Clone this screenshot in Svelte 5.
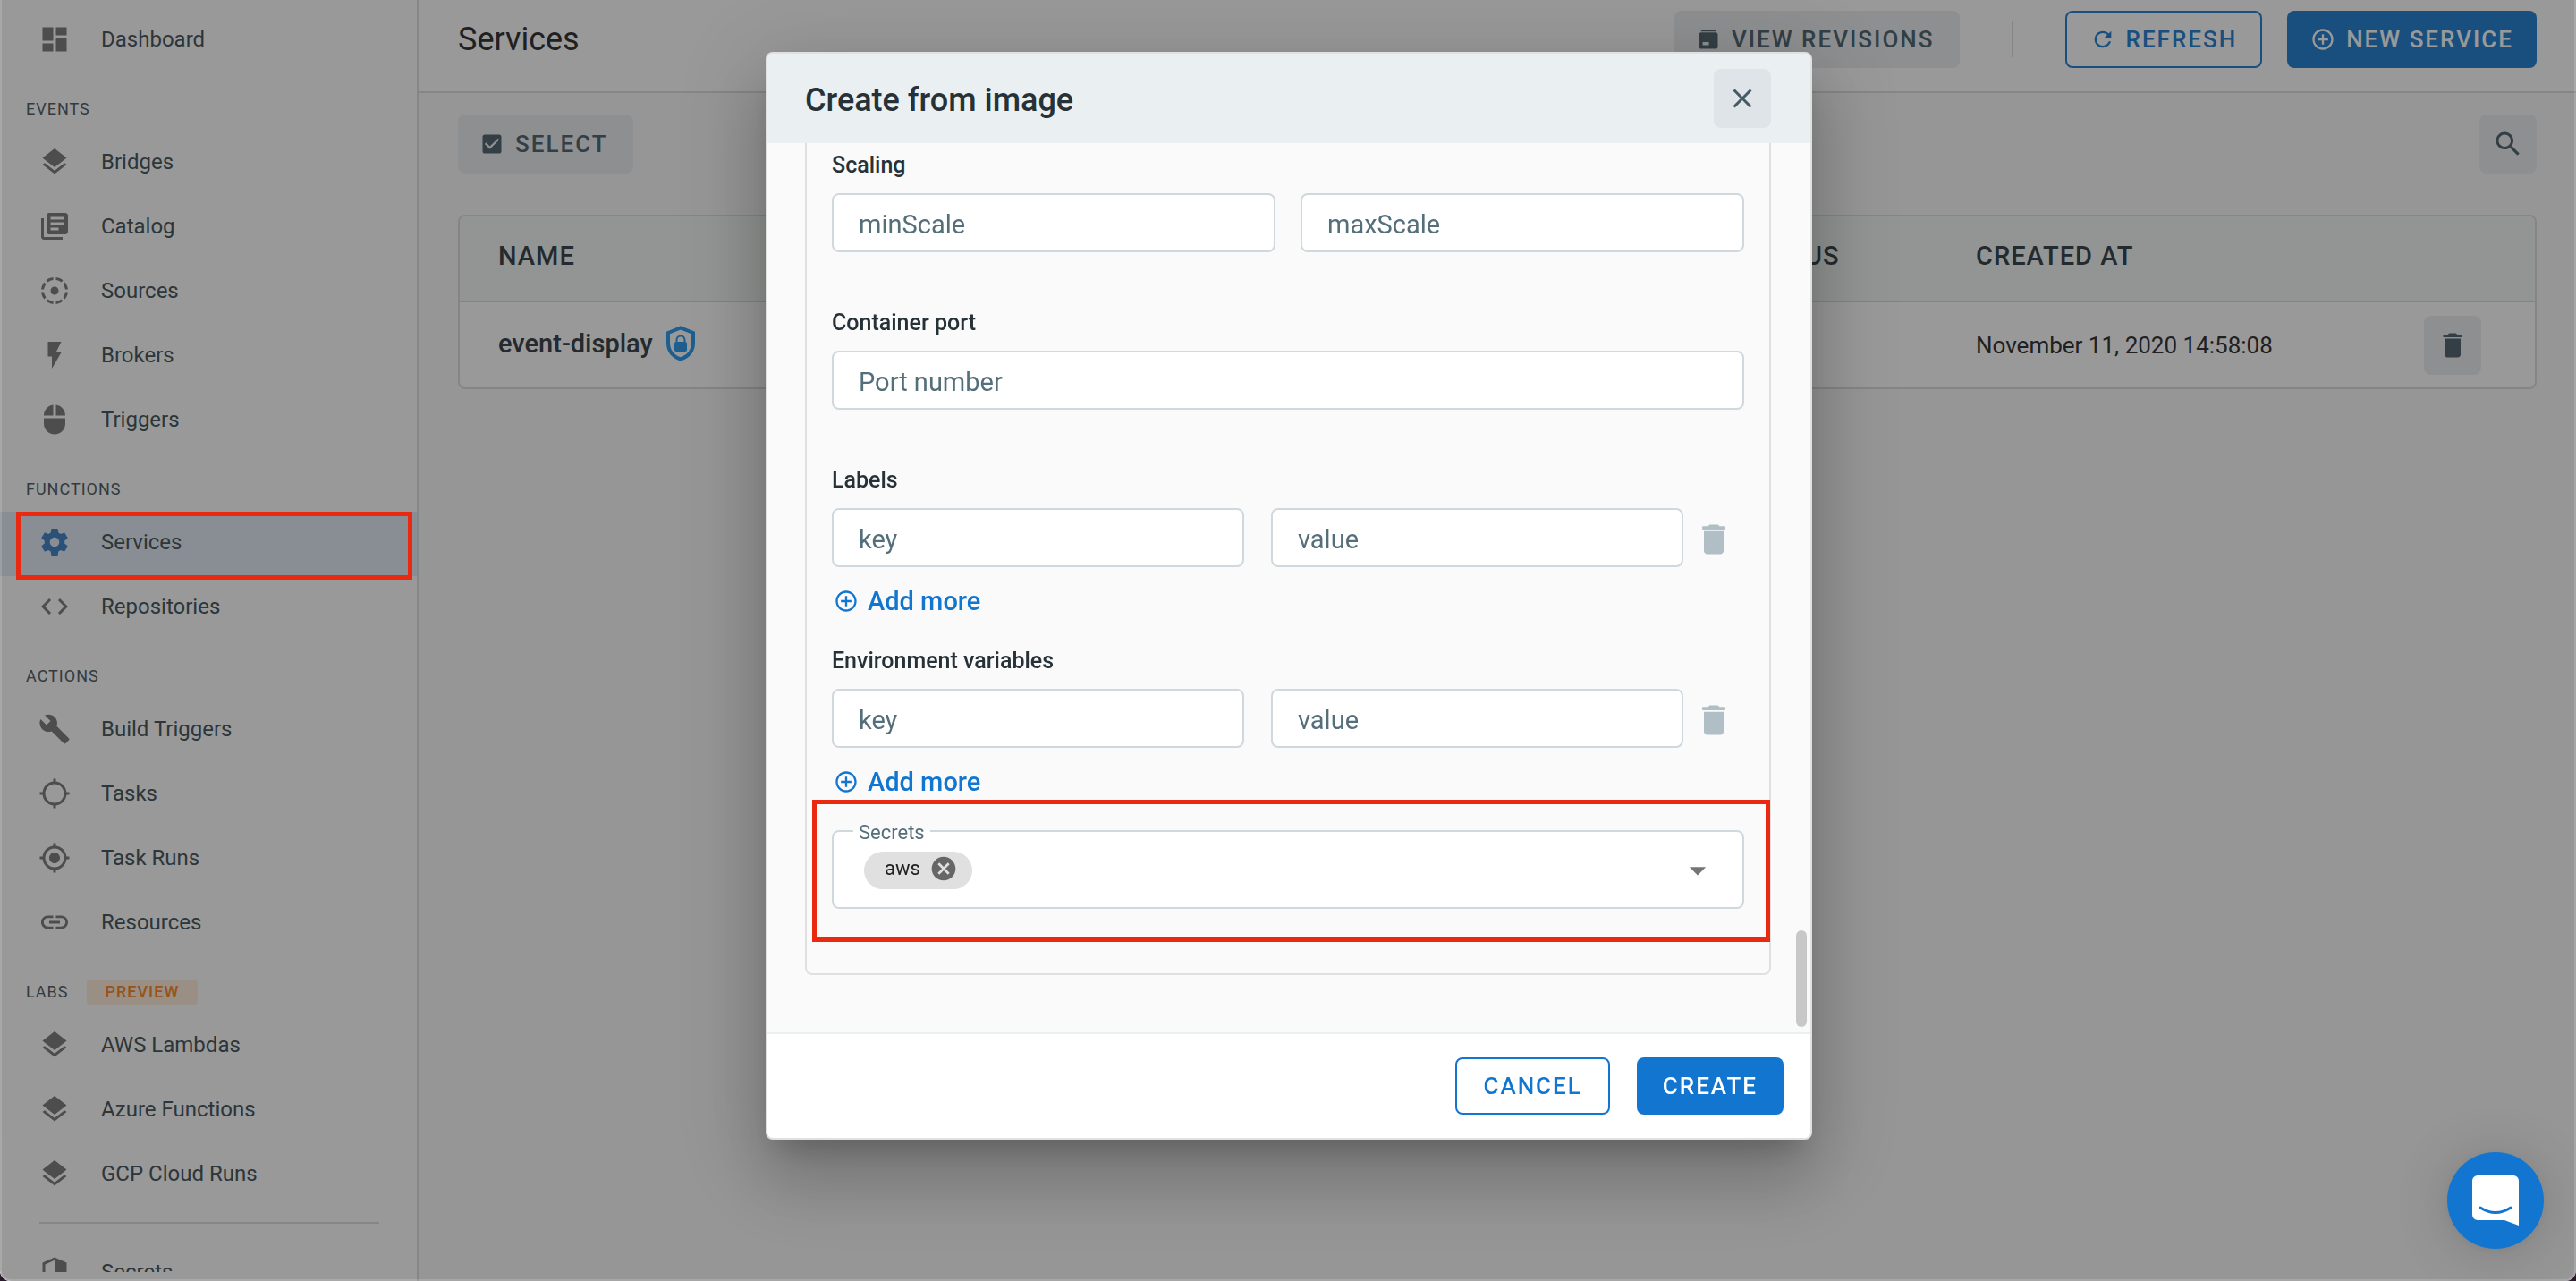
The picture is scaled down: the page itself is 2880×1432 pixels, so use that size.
<script>
  const gps =
    'M20.94 11c-.46-4.17-3.77-7.48-7.94-7.94V1h-2v2.06C6.83 3.52 3.52 6.83 3.06 11H1v2h2.06c.46 4.17 3.77 7.48 7.94 7.94V23h2v-2.06c4.17-.46 7.48-3.77 7.94-7.94H23v-2h-2.06zM12 19c-3.87 0-7-3.13-7-7s3.13-7 7-7 7 3.13 7 7-3.13 7-7 7z';

  const icons = {
    dashboard: 'M3 13h8V3H3v10zm0 8h8v-6H3v6zm10 0h8V11h-8v10zm0-18v6h8V3h-8z',
    layers:
      'M11.99 18.54l-7.37-5.73L3 14.07l9 7 9-7-1.63-1.27-7.38 5.74zM12 16l7.36-5.73L21 9l-9-7-9 7 1.63 1.27L12 16z',
    catalog:
      'M4 6H2v14c0 1.1.9 2 2 2h14v-2H4V6zm16-4H8c-1.1 0-2 .9-2 2v12c0 1.1.9 2 2 2h12c1.1 0 2-.9 2-2V4c0-1.1-.9-2-2-2zm-1 9H9V9h10v2zm-4 4H9v-2h6v2zm4-8H9V5h10v2z',
    sources:
      'M11 4.07V2.05c-2.01.2-3.84 1-5.32 2.21L7.1 5.69c1.11-.86 2.44-1.44 3.9-1.62zm7.32.19C16.84 3.05 15.01 2.25 13 2.05v2.02c1.46.18 2.79.76 3.9 1.62l1.42-1.43zM19.93 11h2.02c-.2-2.01-1-3.84-2.21-5.32L18.31 7.1c.86 1.11 1.44 2.44 1.62 3.9zM5.69 7.1L4.26 5.68C3.05 7.16 2.25 8.99 2.05 11h2.02c.18-1.46.76-2.79 1.62-3.9zM4.07 13H2.05c.2 2.01 1 3.84 2.21 5.32l1.43-1.43c-.86-1.1-1.44-2.43-1.62-3.89zM15 12c0-1.66-1.34-3-3-3s-3 1.34-3 3 1.34 3 3 3 3-1.34 3-3zm3.31 4.9l1.43 1.43c1.21-1.48 2.01-3.32 2.21-5.32h-2.02c-.18 1.45-.76 2.78-1.62 3.89zM13 19.93v2.02c2.01-.2 3.84-1 5.32-2.21l-1.43-1.43c-1.1.86-2.43 1.44-3.89 1.62zm-7.32-.19C7.16 20.95 9 21.75 11 21.95v-2.02c-1.46-.18-2.79-.76-3.9-1.62l-1.42 1.43z',
    bolt: 'M7 2v11h3v9l7-12h-4l4-8z',
    mouse:
      'M13 1.07V9h7c0-4.08-3.05-7.44-7-7.93zM4 15c0 4.42 3.58 8 8 8s8-3.58 8-8v-4H4v4zm7-13.93C7.05 1.56 4 4.92 4 9h7V1.07z',
    gear:
      'M19.43 12.98c.04-.32.07-.64.07-.98s-.03-.66-.07-.98l2.11-1.65c.19-.15.24-.42.12-.64l-2-3.46c-.12-.22-.39-.3-.61-.22l-2.49 1c-.52-.4-1.08-.73-1.69-.98l-.38-2.65C14.46 2.18 14.25 2 14 2h-4c-.25 0-.46.18-.49.42l-.38 2.65c-.61.25-1.17.59-1.69.98l-2.49-1c-.23-.09-.49 0-.61.22l-2 3.46c-.13.22-.07.49.12.64l2.11 1.65c-.04.32-.07.65-.07.98s.03.66.07.98l-2.11 1.65c-.19.15-.24.42-.12.64l2 3.46c.12.22.39.3.61.22l2.49-1c.52.4 1.08.73 1.69.98l.38 2.65c.03.24.24.42.49.42h4c.25 0 .46-.18.49-.42l.38-2.65c.61-.25 1.17-.59 1.69-.98l2.49 1c.23.09.49 0 .61-.22l2-3.46c.12-.22.07-.49-.12-.64l-2.11-1.65zM12 15.5c-1.93 0-3.5-1.57-3.5-3.5s1.57-3.5 3.5-3.5 3.5 1.57 3.5 3.5-1.57 3.5-3.5 3.5z',
    code: 'M9.4 16.6L4.8 12l4.6-4.6L8 6l-6 6 6 6 1.4-1.4zm5.2 0l4.6-4.6-4.6-4.6L16 6l6 6-6 6-1.4-1.4z',
    wrench:
      'M22.7 19l-9.1-9.1c.9-2.3.4-5-1.5-6.9-2-2-5-2.4-7.4-1.3L9 6 6 9 1.6 4.7C.4 7.1.9 10.1 2.9 12.1c1.9 1.9 4.6 2.4 6.9 1.5l9.1 9.1c.4.4 1 .4 1.4 0l2.3-2.3c.5-.4.5-1.1.1-1.4z',
    target: gps,
    targetFilled: 'M12 8c-2.21 0-4 1.79-4 4s1.79 4 4 4 4-1.79 4-4-1.79-4-4-4z' + gps,
    link:
      'M3.9 12c0-1.71 1.39-3.1 3.1-3.1h4V7H7c-2.76 0-5 2.24-5 5s2.24 5 5 5h4v-1.9H7c-1.71 0-3.1-1.39-3.1-3.1zM8 13h8v-2H8v2zm9-6h-4v1.9h4c1.71 0 3.1 1.39 3.1 3.1s-1.39 3.1-3.1 3.1h-4V17h4c2.76 0 5-2.24 5-5s-2.24-5-5-5z',
    shield:
      'M12 1L3 5v6c0 5.55 3.84 10.74 9 12 5.16-1.26 9-6.45 9-12V5l-9-4zm0 10.99h7c-.53 4.12-3.28 7.79-7 8.94V12H5V6.3l7-3.11v8.8z',
    check:
      'M19 3H5c-1.11 0-2 .9-2 2v14c0 1.1.89 2 2 2h14c1.11 0 2-.9 2-2V5c0-1.1-.89-2-2-2zm-9 14l-5-5 1.41-1.41L10 14.17l7.59-7.59L19 8l-9 9z',
    revisions:
      'M5 3h14v1.6H5zM5 5.4h14c1.1 0 2 .9 2 2V19c0 1.100-.9 2-2 2H5c-1.100 0-2-.9-2-2V7.400c0-1.100.9-2 2-2zM6.500 14.500v3h6v-3z',
    refresh:
      'M17.65 6.35C16.2 4.9 14.21 4 12 4c-4.42 0-7.99 3.58-7.99 8s3.57 8 7.99 8c3.73 0 6.84-2.55 7.73-6h-2.08c-.82 2.33-3.04 4-5.65 4-3.31 0-6-2.69-6-6s2.69-6 6-6c1.66 0 3.14.69 4.22 1.78L13 11h7V4l-2.35 2.35z',
    plus:
      'M13 7h-2v4H7v2h4v4h2v-4h4v-2h-4V7zm-1-5C6.48 2 2 6.48 2 12s4.48 10 10 10 10-4.48 10-10S17.52 2 12 2zm0 18c-4.41 0-8-3.59-8-8s3.59-8 8-8 8 3.59 8 8-3.59 8-8 8z',
    search:
      'M15.5 14h-.79l-.28-.27C15.41 12.59 16 11.11 16 9.5 16 5.91 13.09 3 9.5 3S3 5.91 3 9.5 5.91 16 9.5 16c1.61 0 3.09-.59 4.23-1.57l.27.28v.79l5 4.99L20.49 19l-4.99-5zm-6 0C7.01 14 5 11.99 5 9.5S7.01 5 9.5 5 14 7.01 14 9.5 11.99 14 9.5 14z',
    close:
      'M19 6.41L17.59 5 12 10.59 6.41 5 5 6.41 10.59 12 5 17.59 6.41 19 12 13.41 17.59 19 19 17.59 13.41 12z',
    trash: 'M6 19c0 1.1.9 2 2 2h8c1.1 0 2-.9 2-2V7H6v12zM19 4h-3.5l-1-1h-5l-1 1H5v2h14V4z',
    cancel:
      'M12 2C6.47 2 2 6.47 2 12s4.47 10 10 10 10-4.47 10-10S17.53 2 12 2zm5 13.59L15.59 17 12 13.41 8.41 17 7 15.59 10.59 12 7 8.41 8.41 7 12 10.59 15.59 7 17 8.41 13.41 12 17 15.59z',
    caret: 'M7 10l5 5 5-5z'
  };

  const sections = [
    { items: [{ label: 'Dashboard', icon: 'dashboard' }] },
    {
      title: 'EVENTS',
      items: [
        { label: 'Bridges', icon: 'layers' },
        { label: 'Catalog', icon: 'catalog' },
        { label: 'Sources', icon: 'sources' },
        { label: 'Brokers', icon: 'bolt' },
        { label: 'Triggers', icon: 'mouse' }
      ]
    },
    {
      title: 'FUNCTIONS',
      items: [
        { label: 'Services', icon: 'gear', active: true },
        { label: 'Repositories', icon: 'code' }
      ]
    },
    {
      title: 'ACTIONS',
      items: [
        { label: 'Build Triggers', icon: 'wrench' },
        { label: 'Tasks', icon: 'target' },
        { label: 'Task Runs', icon: 'targetFilled' },
        { label: 'Resources', icon: 'link' }
      ]
    },
    {
      title: 'LABS',
      badge: 'PREVIEW',
      items: [
        { label: 'AWS Lambdas', icon: 'layers' },
        { label: 'Azure Functions', icon: 'layers' },
        { label: 'GCP Cloud Runs', icon: 'layers' }
      ]
    },
    { divided: true, items: [{ label: 'Secrets', icon: 'shield' }] }
  ];

  const pairs = [
    { id: 'labels', title: 'Labels' },
    { id: 'env', title: 'Environment variables' }
  ];
</script>

{#snippet icon(name, size)}
  <svg class="icon {size}" viewBox="0 0 24 24" aria-hidden="true"><path fill-rule="evenodd" d={icons[name]} /></svg>
{/snippet}

<div class="page">
  <aside class="sidebar">
    <nav aria-label="Main">
      {#each sections as section}
        {#if section.divided}<hr />{/if}
        {#if section.title}
          <h2 class="section-title">
            <span>{section.title}</span>
            {#if section.badge}<span class="preview">{section.badge}</span>{/if}
          </h2>
        {/if}
        <ul>
          {#each section.items as item}
            <li>
              <a href="#{item.label}" class:active={item.active}>
                {@render icon(item.icon, 'md')}
                <span>{item.label}</span>
              </a>
              {#if item.active}<div class="mark mark-nav"></div>{/if}
            </li>
          {/each}
        </ul>
      {/each}
    </nav>
  </aside>

  <main>
    <header class="topbar">
      <h1>Services</h1>
      <div class="actions">
        <button class="btn soft">{@render icon('revisions', 'sm')}VIEW REVISIONS</button>
        <span class="separator"></span>
        <button class="btn outline dim">{@render icon('refresh', 'sm')}REFRESH</button>
        <button class="btn solid dim">{@render icon('plus', 'sm')}NEW SERVICE</button>
      </div>
    </header>

    <div class="content">
      <div class="toolbar">
        <button class="btn soft tall">{@render icon('check', 'sm')}SELECT</button>
        <button class="square" aria-label="Search">{@render icon('search', 'md')}</button>
      </div>
      <div class="table-card">
        <table>
          <colgroup>
            <col />
            <col class="col-status" />
            <col class="col-created" />
            <col class="col-action" />
          </colgroup>
          <thead>
            <tr>
              <th>NAME</th>
              <th>STATUS</th>
              <th>CREATED AT</th>
              <th></th>
            </tr>
          </thead>
          <tbody>
            <tr>
              <td>
                <div class="name">
                  <strong>event-display</strong>
                  <svg class="lock" viewBox="0 0 34 40" aria-hidden="true">
                    <path d="M17 2.500L31 8v11c0 9-5.500 15.500-14 18.500C8.500 34.500 3 28 3 19V8z" fill="none" stroke="currentColor" stroke-width="4" />
                    <path d="M12.500 19v-3a4.500 4.500 0 0 1 9 0v3" fill="none" stroke="currentColor" stroke-width="2" />
                    <rect x="10" y="18" width="14" height="11" rx="2" fill="currentColor" />
                  </svg>
                </div>
              </td>
              <td></td>
              <td>November 11, 2020 14:58:08</td>
              <td class="action">
                <button class="square" aria-label="Delete event-display">{@render icon('trash', 'md')}</button>
              </td>
            </tr>
          </tbody>
        </table>
      </div>
    </div>
  </main>

  <div class="backdrop"></div>
</div>

<div class="dialog-layer">
  <div class="dialog" role="dialog" aria-modal="true" aria-labelledby="dialog-title">
    <header class="dialog-head">
      <h2 id="dialog-title">Create from image</h2>
      <button class="square close" aria-label="Close">{@render icon('close', 'md')}</button>
    </header>

    <div class="dialog-body">
      <div class="panel">
        <section class="field">
          <h3 id="scaling">Scaling</h3>
          <div class="row" role="group" aria-labelledby="scaling">
            <input type="text" placeholder="minScale" aria-label="minScale" />
            <input type="text" placeholder="maxScale" aria-label="maxScale" />
          </div>
        </section>

        <section class="field">
          <label for="port">Container port</label>
          <input id="port" type="text" placeholder="Port number" />
        </section>

        {#each pairs as pair}
          <section class="field pair">
            <h3 id={pair.id}>{pair.title}</h3>
            <div class="row" role="group" aria-labelledby={pair.id}>
              <input type="text" placeholder="key" aria-label="{pair.title} key" />
              <input type="text" placeholder="value" aria-label="{pair.title} value" />
              <button class="remove" aria-label="Remove">{@render icon('trash', 'lg')}</button>
            </div>
            <button class="add">{@render icon('plus', 'sm')}Add more</button>
          </section>
        {/each}

        <div class="secrets-wrap">
          <fieldset>
            <legend>Secrets</legend>
            <div class="chips">
              <span class="chip">
                aws
                <button aria-label="Remove aws">{@render icon('cancel', 'chip-icon')}</button>
              </span>
              <select aria-label="Secrets"><option value=""></option><option>aws</option></select>
              {@render icon('caret', 'lg')}
            </div>
          </fieldset>
          <div class="mark mark-secrets"></div>
        </div>
      </div>
      <div class="thumb"></div>
    </div>

    <footer>
      <button class="btn outline">CANCEL</button>
      <button class="btn solid">CREATE</button>
    </footer>
  </div>
</div>

<button class="chat" aria-label="Open chat">
  <svg viewBox="0 0 52 56" aria-hidden="true">
    <path d="M6 0h40a6 6 0 0 1 6 6v50l-16-6H6a6 6 0 0 1-6-6V6a6 6 0 0 1 6-6z" fill="#fff" />
    <path d="M9 36q17 11 34 0" fill="none" stroke="#1276d0" stroke-width="3" stroke-linecap="round" />
  </svg>
</button>

<style>
  :global(body) {
    background: #2a1a2c;
    font-family: Roboto, sans-serif;
    font-size: 24px;
    color: #263238;
  }
  * {
    box-sizing: border-box;
  }
  h1, h2, h3, ul, hr, fieldset {
    margin: 0;
    padding: 0;
  }
  button, input, select {
    font: inherit;
    color: inherit;
  }
  button {
    display: inline-flex;
    align-items: center;
    justify-content: center;
    padding: 0;
    border: 0;
    background: none;
    cursor: pointer;
  }

  .icon {
    display: block;
    flex: none;
    fill: currentColor;
  }
  .sm { width: 28px; height: 28px; }
  .md { width: 36px; height: 36px; }
  .lg { width: 44px; height: 44px; }
  .chip-icon { width: 32px; height: 32px; }

  .page {
    position: relative;
    display: flex;
    height: 100vh;
    overflow: hidden;
    border-radius: 0 0 12px 12px;
    background: #fafafa;
  }
  .backdrop {
    position: absolute;
    inset: 0;
    z-index: 10;
    background: rgba(0, 0, 0, 0.4);
    border: solid rgba(255, 255, 255, 0.15);
    border-width: 0 2px 2px;
    border-radius: 0 0 12px 12px;
  }

  .sidebar {
    display: flex;
    flex: none;
    width: 468px;
    padding-bottom: 10px;
    border-right: 2px solid #e0e0e0;
    background: #fff;
  }
  nav {
    flex: 1;
    padding-top: 10px;
    overflow: hidden;
  }
  ul {
    list-style: none;
  }
  li {
    position: relative;
  }
  nav a {
    display: flex;
    align-items: center;
    gap: 34px;
    height: 72px;
    padding: 0 43px 4px;
    color: #4b5b62;
    text-decoration: none;
  }
  nav a .icon {
    color: #808080;
  }
  nav a.active {
    background: #e3edf6;
  }
  nav a.active .icon {
    color: #4a87ca;
  }
  .section-title {
    display: flex;
    align-items: center;
    gap: 20px;
    height: 65px;
    padding: 14px 29px 0;
    font-size: 18px;
    font-weight: 400;
    letter-spacing: 1px;
    color: #54636a;
  }
  .preview {
    padding: 0 21px;
    border-radius: 4px;
    background: #ffefdc;
    color: #fd8a2d;
    font-weight: 500;
    line-height: 28px;
  }
  hr {
    margin: 16px 42px 20px 44px;
    border: 0;
    border-top: 2px solid #e0e0e0;
  }

  .mark {
    position: absolute;
    border: 5px solid #ea2a10;
    pointer-events: none;
  }
  .mark-nav {
    inset: 0 5px -4px 18px;
    z-index: 15;
  }
  .mark-secrets {
    inset: -19px -29px -37px -22px;
  }

  main {
    flex: 1;
    min-width: 0;
  }
  .topbar {
    display: flex;
    align-items: flex-start;
    justify-content: space-between;
    height: 104px;
    padding: 12px 44px 0;
    border-bottom: 2px solid #e0e0e0;
    background: #fff;
  }
  h1 {
    font-size: 36px;
    font-weight: 400;
    line-height: 64px;
    color: #363636;
  }
  .actions {
    display: flex;
    align-items: center;
    gap: 28px;
  }
  .separator {
    width: 2px;
    height: 40px;
    margin: 0 30px;
    background: #e0e0e0;
  }

  .btn {
    gap: 12px;
    height: 64px;
    padding: 0 26px;
    border-radius: 8px;
    font-size: 26px;
    font-weight: 500;
    letter-spacing: 2px;
  }
  .soft {
    padding: 0 28px 0 24px;
    background: #edeff1;
    color: #566a73;
  }
  .tall {
    height: 66px;
  }
  .outline {
    border: 2px solid #1276d0;
    color: #1276d0;
  }
  .solid {
    background: #1276d0;
    color: #fff;
  }
  .outline.dim {
    border-color: #2b84d3;
    color: #2b84d3;
  }
  .solid.dim {
    background: #2b84d3;
  }
  .square {
    width: 64px;
    height: 66px;
    border-radius: 8px;
    background: #edeff1;
    color: #566a73;
  }

  .content {
    padding: 24px 44px;
  }
  .toolbar {
    display: flex;
    justify-content: space-between;
    margin-bottom: 46px;
  }
  .table-card {
    overflow: hidden;
    border: 2px solid #dedede;
    border-radius: 8px;
    background: #fff;
  }
  table {
    width: 100%;
    table-layout: fixed;
    border-collapse: collapse;
  }
  .col-status { width: 264px; }
  .col-created { width: 500px; }
  .col-action { width: 168px; }
  th, td {
    height: 96px;
    padding: 0 43px;
    text-align: left;
  }
  th {
    height: 95px;
    padding-bottom: 6px;
    border-bottom: 2px solid #dadada;
    background: #f3f8f5;
    color: #3c474c;
    font-size: 29px;
    font-weight: 500;
    letter-spacing: 1px;
  }
  td {
    color: #363636;
    font-size: 26px;
  }
  .action {
    text-align: right;
    padding-right: 60px;
  }
  .name {
    display: flex;
    align-items: center;
    gap: 14px;
    padding-bottom: 4px;
  }
  .name strong {
    font-size: 29px;
    font-weight: 500;
    color: #3c474c;
  }
  .lock {
    width: 34px;
    height: 40px;
    color: #309ff0;
  }

  .dialog-layer {
    position: fixed;
    inset: 0;
    z-index: 20;
    display: flex;
    align-items: flex-start;
    justify-content: center;
    padding: 58px 40px 40px 42px;
  }
  .dialog {
    width: 100%;
    max-width: 1170px;
    overflow: hidden;
    border: 2px solid #e0e0e0;
    border-radius: 8px;
    background: #fff;
    box-shadow: 0 22px 30px -14px rgba(0, 0, 0, 0.2), 0 48px 76px 6px rgba(0, 0, 0, 0.14),
      0 18px 92px 16px rgba(0, 0, 0, 0.12);
  }
  .dialog-head {
    display: flex;
    align-items: center;
    justify-content: space-between;
    height: 100px;
    padding: 0 44px 0 42px;
    background: #eaeff2;
  }
  .dialog-head h2 {
    padding-top: 4px;
    font-size: 36px;
    font-weight: 500;
  }
  .close {
    background: #dee4e8;
    color: #455a64;
  }
  .dialog-body {
    position: relative;
    padding: 0 44px 64px 42px;
    background: #fafafa;
  }
  .panel {
    padding: 9px 28px 72px;
    border: 2px solid #e0e0e0;
    border-top: 0;
    border-radius: 0 0 8px 8px;
  }
  .field {
    display: flex;
    flex-direction: column;
    gap: 15px;
    margin-bottom: 63px;
  }
  h3, label {
    font-size: 25px;
    font-weight: 500;
    line-height: 32px;
  }
  .row {
    display: flex;
    align-items: center;
    gap: 28px;
  }
  input {
    flex: 1;
    width: 100%;
    min-width: 0;
    height: 66px;
    min-height: 66px;
    padding: 4px 28px 0;
    border: 2px solid #cfd8dc;
    border-radius: 8px;
    background: #fff;
    font-size: 29px;
  }
  input::placeholder {
    color: #546e7a;
    opacity: 1;
  }
  .pair {
    margin-bottom: 35px;
  }
  .pair .row {
    gap: 30px;
  }
  .remove {
    width: 44px;
    margin: 4px 12px 0 -18px;
    color: #b0bec5;
  }
  .add {
    align-self: flex-start;
    gap: 10px;
    height: 32px;
    margin-top: 7px;
    padding-left: 2px;
    color: #1276d0;
    font-size: 29px;
    font-weight: 500;
  }

  .secrets-wrap {
    position: relative;
    margin-top: -12px;
  }
  fieldset {
    min-width: 0;
    padding: 0 28px;
    border: 2px solid #cfd8dc;
    border-radius: 8px;
    background: #fff;
  }
  legend {
    margin-left: -6px;
    padding: 4px 6px 0;
    font-size: 22px;
    line-height: 28px;
    color: #546e7a;
  }
  .chips {
    display: flex;
    align-items: center;
    height: 69px;
    padding: 0 0 14px 6px;
  }
  .chip {
    display: flex;
    align-items: center;
    gap: 10px;
    height: 42px;
    padding: 0 16px 4px 23px;
    border-radius: 21px;
    background: #e0e0e0;
    color: #212121;
    font-size: 22px;
  }
  .chip button {
    color: #666;
  }
  select {
    flex: 1;
    height: 44px;
    appearance: none;
    border: 0;
    background: transparent;
  }
  .chips > :global(.icon) {
    color: #757575;
  }
  .thumb {
    position: absolute;
    right: 4px;
    bottom: 6px;
    width: 12px;
    height: 108px;
    border-radius: 6px;
    background: #c8c8c8;
  }
  footer {
    display: flex;
    justify-content: flex-end;
    gap: 30px;
    padding: 26px 30px;
    border-top: 2px solid #eaeff2;
  }
  footer .btn {
    padding: 0 29px;
  }

  .chat {
    position: fixed;
    right: 36px;
    bottom: 36px;
    z-index: 30;
    width: 108px;
    height: 108px;
    border-radius: 50%;
    background: #1276d0;
    box-shadow: 0 2px 12px rgba(0, 0, 0, 0.06), 0 4px 64px rgba(0, 0, 0, 0.16);
  }
  .chat svg {
    width: 52px;
    height: 56px;
  }
</style>
